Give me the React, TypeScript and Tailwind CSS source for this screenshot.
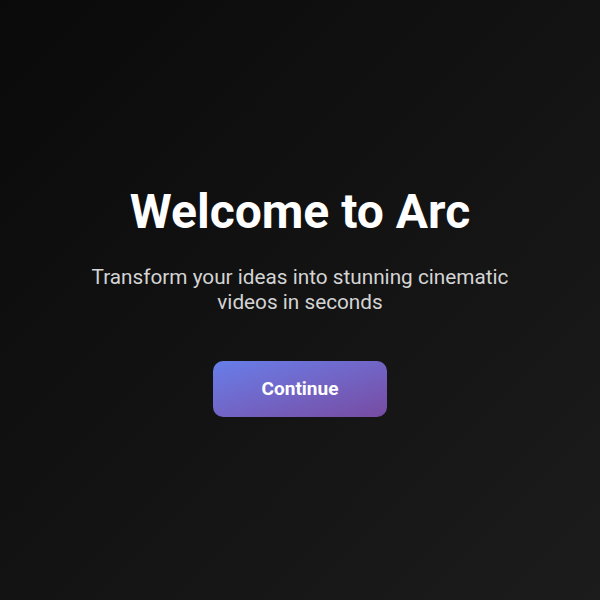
export default function App() {
  return (
    <div className="min-h-screen flex items-center justify-center pt-[4px] bg-gradient-to-br from-[#0a0a0a] to-[#1c1c1c] font-['Roboto',sans-serif]">
      <div className="flex flex-col items-center text-center px-6">
        <h1 className="text-5xl font-bold leading-none text-white mb-7">Welcome to Arc</h1>
        <p className="text-[20.75px] leading-[25px] text-[#d4d4d4] max-w-[440px] mt-[1px] mb-[46px]">
          Transform your ideas into stunning cinematic videos in seconds
        </p>
        <button className="px-[49px] py-3.5 rounded-[10px] bg-gradient-to-br from-[#667eea] to-[#764ba2] text-white text-[19px] font-bold leading-7">
          Continue
        </button>
      </div>
    </div>
  );
}
